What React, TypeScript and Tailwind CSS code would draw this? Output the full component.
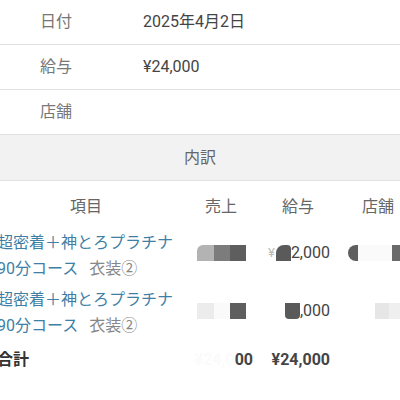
import React from "react";

const font = { fontFamily: 'Roboto, "Noto Sans CJK JP", sans-serif' };

const infoRows = [
  { label: "日付", value: "2025年4月2日" },
  { label: "給与", value: "¥24,000" },
  { label: "店舗", value: "" },
];

const Block = ({ className }: { className: string }) => (
  <span className={`inline-block h-[16px] ${className}`} />
);

const ItemName = () => (
  <div className="text-[16px] leading-[26px]">
    <div className="text-[#3f7fa6] whitespace-nowrap">超密着＋神とろプラチナ</div>
    <div className="whitespace-nowrap">
      <span className="text-[#3f7fa6]">90分コース</span>
      <span className="ml-[11px] text-[#888]">衣装②</span>
    </div>
  </div>
);

export default function App() {
  return (
    <div className="w-[400px] h-[400px] overflow-hidden bg-white text-[#333]" style={font}>
      {infoRows.map((row) => (
        <div key={row.label} className="flex items-center h-[45px] border-b border-[#e0e0e0]">
          <div className="w-[143px] pl-[40px] text-[16px] text-[#777]">{row.label}</div>
          <div className="text-[16px] text-[#444]">{row.value}</div>
        </div>
      ))}

      <div className="h-[46px] flex items-center justify-center bg-[#f2f2f2] border-b border-[#e0e0e0] text-[16px] text-[#666]">
        内訳
      </div>

      <div className="ml-[-9px] w-[430px]">
        <div className="grid grid-cols-[190px_80px_74px_86px] h-[46px] pt-[6px] items-center text-[16px] text-[#666]">
          <div className="text-center">項目</div>
          <div className="text-center">売上</div>
          <div className="text-center">給与</div>
          <div className="text-center">店舗</div>
        </div>

        <div className="grid grid-cols-[190px_80px_74px_86px] h-[57px] items-center text-[16px] text-[#444]">
          <div className="pl-[6px]"><ItemName /></div>
          <div className="flex justify-end pr-[15px] pb-[5px] items-center">
            <Block className="w-[17px] bg-[#b3b3b3] rounded-tl-[6px]" />
            <Block className="w-[16px] bg-[#7c7c7c]" />
            <Block className="w-[16px] bg-[#5e5e5e]" />
          </div>
          <div className="flex justify-end items-center pr-[5px] pb-[5px]">
            <span className="text-[#bbb] text-[13px] mr-[1px]">¥</span>
            <Block className="w-[15px] bg-[#5a5a5a] rounded-tl-[8px] rounded-tr-[4px]" />
            <span>2,000</span>
          </div>
          <div className="flex items-center pl-[13px] pb-[5px]">
            <Block className="w-[10px] bg-[#5e5e5e] rounded-l-[8px]" />
            <Block className="w-[34px] bg-[#fafafa]" />
            <Block className="w-[10px] bg-[#6a6a6a]" />
          </div>
        </div>

        <div className="grid grid-cols-[190px_80px_74px_86px] h-[57px] items-center text-[16px] text-[#444]">
          <div className="pl-[6px]"><ItemName /></div>
          <div className="flex justify-end pr-[15px] pb-[3px] items-center">
            <Block className="w-[17px] bg-[#ececec]" />
            <Block className="w-[16px] bg-[#fafafa]" />
            <Block className="w-[16px] bg-[#5e5e5e]" />
          </div>
          <div className="flex justify-end items-center pr-[5px] pb-[3px]">
            <Block className="w-[15px] bg-[#5a5a5a] rounded-b-[4px]" />
            <span>,000</span>
          </div>
          <div className="flex items-center pl-[40px] pb-[3px]">
            <Block className="w-[14px] bg-[#e6e6e6]" />
            <Block className="w-[14px] bg-[#efefef]" />
          </div>
        </div>

        <div className="grid grid-cols-[190px_80px_74px_86px] h-[38px] items-center text-[16px] text-[#444] font-bold">
          <div className="pl-[6px] text-[#333]">合計</div>
          <div className="flex justify-end pr-[8px]">
            <span className="text-[#fbfbfb]">¥24,0</span>
            <span>00</span>
          </div>
          <div className="text-right pr-[5px]">¥24,000</div>
          <div />
        </div>
      </div>
      <div className="mt-[22px] border-b border-[#e0e0e0]" />
    </div>
  );
}
